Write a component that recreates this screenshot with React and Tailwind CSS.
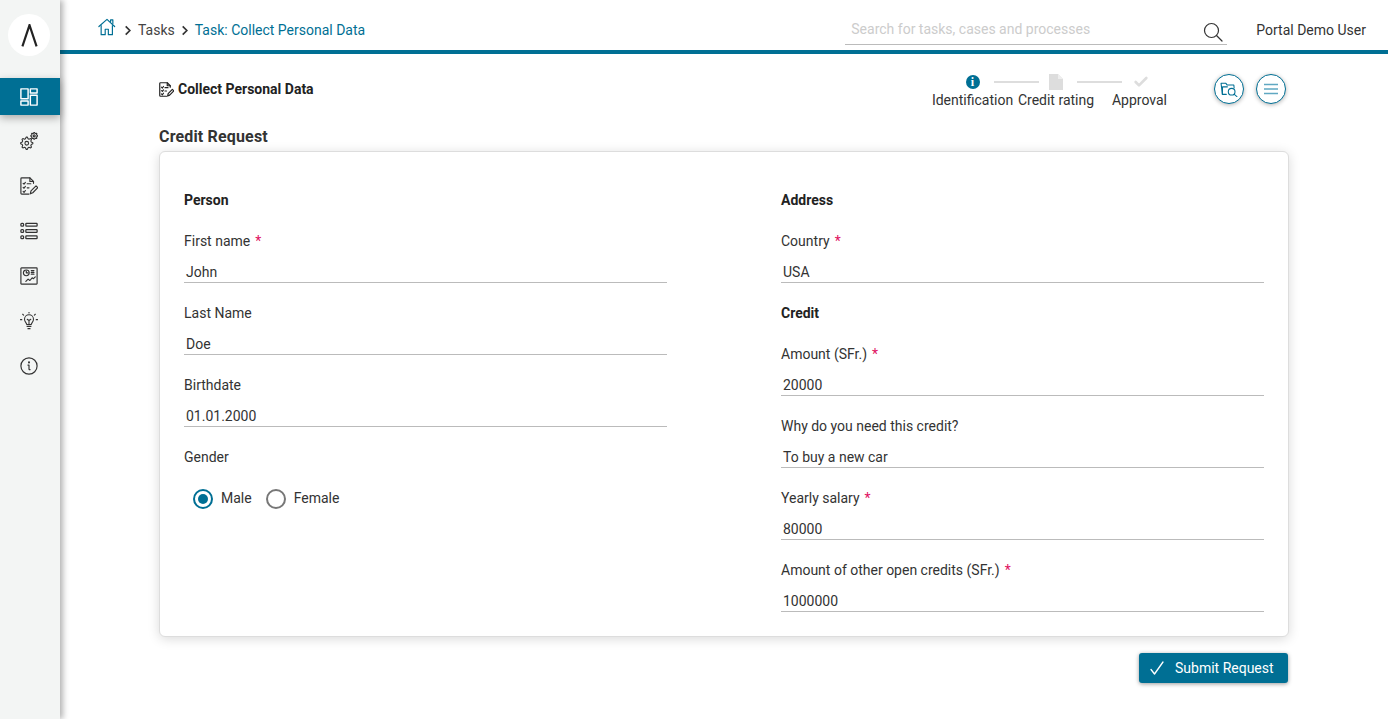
import { Check } from 'lucide-react';

const Stroke = ({ children, className = 'w-[18px] h-[18px]', w = 1.3 }) => (
  <svg viewBox="0 0 20 20" fill="none" stroke="currentColor" strokeWidth={w} strokeLinecap="round" strokeLinejoin="round" className={className}>
    {children}
  </svg>
);

const DashboardIcon = () => (
  <Stroke className="w-[18px] h-[18px] text-white" w={1.6}>
    <rect x="1" y="1" width="8" height="11" />
    <rect x="1" y="14.500" width="8" height="4.500" />
    <rect x="11.500" y="1" width="7.500" height="4.500" />
    <rect x="11.500" y="8" width="7.500" height="11" />
  </Stroke>
);

const Gear = ({ cx, cy, r, spokes = 8 }) => {
  const pts = [];
  for (let i = 0; i < spokes * 4; i++) {
    const a = (Math.PI * 2 * (i - 0.5)) / (spokes * 4);
    const rad = i % 4 < 2 ? r : r * 0.76;
    pts.push(`${(cx + rad * Math.cos(a)).toFixed(2)},${(cy + rad * Math.sin(a)).toFixed(2)}`);
  }
  return (
    <>
      <polygon points={pts.join(' ')} />
      <circle cx={cx} cy={cy} r={r * 0.3} />
    </>
  );
};

const ProcessIcon = () => (
  <Stroke w={1.2}>
    <Gear cx={7.500} cy={12.500} r={6.800} />
    <Gear cx={15.800} cy={4.300} r={3.800} />
  </Stroke>
);

const TaskIcon = ({ className = 'w-[18px] h-[18px]', w = 1.3 }) => (
  <Stroke className={className} w={w}>
    <path d="M15 7V5l-4-4H2a1 1 0 0 0-1 1v16a1 1 0 0 0 1 1h8" />
    <path d="M11 1v4h4" />
    <path d="M3.500 7l1 1 1.500-2M3.500 11.500l1 1 1.500-2M3.500 16l1 1 1.500-2" />
    <path d="M8 7.500h4M8 12h2" />
    <path d="M11.500 18.700l.7-3.200 5.600-5.600 2 2-5.600 5.600z" />
  </Stroke>
);

const ListIcon = () => (
  <Stroke w={1.4}>
    <rect x="1" y="1.500" width="3" height="3" rx="1" />
    <rect x="6.500" y="1.500" width="12.500" height="3" rx=".6" />
    <rect x="1" y="8.500" width="3" height="3" rx="1" />
    <rect x="6.500" y="8.500" width="12.500" height="3" rx=".6" />
    <rect x="1" y="15.500" width="3" height="3" rx="1" />
    <rect x="6.500" y="15.500" width="12.500" height="3" rx=".6" />
  </Stroke>
);

const StatsIcon = () => (
  <Stroke w={1.3}>
    <rect x="1" y="1" width="18" height="18" rx=".6" />
    <circle cx="7" cy="6.500" r="3.200" />
    <path d="M7 4.500v2h2" />
    <path d="M12.500 4h3M12.500 6h3M12.500 8h3" />
    <path d="M6.500 16l2.500-2.500 2 1.500 2.500-3 1.500 1 2-2" />
  </Stroke>
);

const BulbIcon = () => (
  <Stroke w={1.2}>
    <path d="M7.500 14c0-2-2.500-2.700-2.500-6a5 5 0 0 1 10 0c0 3.300-2.500 4-2.500 6z" />
    <path d="M8 8l2 1.500L12 8M10 9.500V14" />
    <path d="M7.800 16.200h4.400M8.800 18.500h2.400" />
    <path d="M10 .3v.8M3 2.500l1 1M17 2.500l-1 1M.5 8.500h1.500M18 8.500h1.500" />
  </Stroke>
);

const InfoIcon = () => (
  <Stroke w={1.3}>
    <circle cx="10" cy="10" r="9" />
    <circle cx="10" cy="6" r=".5" />
    <path d="M8.800 9H10v4.500c0 .5.5.7 1.200.5" />
  </Stroke>
);

const HomeIcon = () => (
  <svg viewBox="0 0 20 20" fill="none" stroke="currentColor" strokeWidth="1.300" strokeLinecap="round" strokeLinejoin="round" className="w-[18px] h-[18px] -mt-[6px] text-[#006f94]">
    <path d="M1 9.500L10 1.500l8.500 8" />
    <path d="M3.500 8.500V18.500H8V12.500h3.500v6H16V8.500" />
    <path d="M14 4V2h2.500v4" />
  </svg>
);

const Chevron = () => (
  <svg viewBox="0 0 8 12" fill="none" stroke="#333" strokeWidth="1.800" className="w-[8px] h-[11px]">
    <path d="M1.500 1.500L6 6l-4.500 4.500" />
  </svg>
);

const SearchIcon = () => (
  <svg viewBox="0 0 20 20" fill="none" stroke="#333" strokeWidth="1.200" strokeLinecap="round" className="w-[20px] h-[20px] mt-[4px]">
    <circle cx="8.500" cy="8.500" r="7" />
    <path d="M13.500 13.500L19 19" />
  </svg>
);

const FolderSearchIcon = () => (
  <svg viewBox="0 0 20 17" fill="none" stroke="currentColor" strokeWidth="1.200" strokeLinecap="round" strokeLinejoin="round" className="w-[18px] h-[15px] text-[#006f94]">
    <path d="M7 14H2.500L1 1.500h5.500l1.500 2h7.500l.3 3" />
    <path d="M2.500 14L2.700 5.500h5.500" />
    <circle cx="13" cy="11" r="3.800" />
    <path d="M16 14l3 2.500" />
  </svg>
);

const MenuIcon = () => (
  <svg viewBox="0 0 14 12" fill="none" stroke="#5fa8c2" strokeWidth="1.500" className="w-[14px] h-[12px]">
    <path d="M0 1.500h14M0 6h14M0 10.500h14" />
  </svg>
);

const SubmitCheck = () => (
  <svg viewBox="0 0 14 14" fill="none" stroke="white" strokeWidth="1.300" strokeLinecap="round" strokeLinejoin="round" className="w-[14px] h-[14px]">
    <path d="M1 8.500L4.500 13 13 1" />
  </svg>
);

const navIcons = [ProcessIcon, TaskIcon, ListIcon, StatsIcon, BulbIcon, InfoIcon];

const Sidebar = () => (
  <aside className="w-[60px] h-[719px] bg-[#f3f5f4] shadow-[3px_0_6px_rgba(0,0,0,0.3)] flex flex-col shrink-0 z-10">
    <div className="pt-[14px] flex justify-center pr-[2px]">
      <div className="w-[42px] h-[42px] rounded-full bg-white flex items-center justify-center">
        <svg viewBox="0 0 18 24" className="w-[17px] h-[23px]" fill="none" stroke="#222" strokeWidth="2.300">
          <path d="M1.500 23.500L9 1l7.500 22.500" />
        </svg>
      </div>
    </div>
    <div className="mt-[22px] h-[37px] bg-[#006f94] shadow-[0_3px_8px_rgba(0,0,0,0.3)] flex items-center justify-center pr-[2px]">
      <DashboardIcon />
    </div>
    <div className="flex flex-col items-center pr-[2px] pt-[17px] gap-[27px] text-[#333]">
      {navIcons.map((Icon, i) => (
        <Icon key={i} />
      ))}
    </div>
  </aside>
);

const Topbar = () => (
  <header className="h-[54px] border-b-4 border-[#006f94] flex items-center">
    <div className="flex items-center pl-[38px] text-[14px] mt-[10px]">
      <HomeIcon />
      <span className="ml-[8px]"><Chevron /></span>
      <span className="ml-[6px] text-[#444]">Tasks</span>
      <span className="ml-[6px]"><Chevron /></span>
      <span className="ml-[6px] text-[#006f94]">Task: Collect Personal Data</span>
    </div>
    <div className="ml-auto flex items-center mt-[10px]">
      <div className="w-[382px] h-[30px] border-b border-[#bbb] flex items-center justify-between pl-[6px] pr-[4px]">
        <span className="text-[14px] text-[#ccc]">Search for tasks, cases and processes</span>
        <SearchIcon />
      </div>
      <span className="ml-[29px] mr-[22px] text-[14px] text-[#333]">Portal Demo User</span>
    </div>
  </header>
);

const Stepper = () => (
  <div className="flex flex-col text-[14px] text-[#333]">
    <div className="flex items-center justify-center h-[16px] pl-[2px]">
      <div className="w-[14px] h-[14px] rounded-full bg-[#006f94] text-white flex items-center justify-center font-['Liberation_Serif',serif] font-bold text-[12px]">i</div>
      <div className="w-[45px] h-[2px] bg-[#ddd] ml-[14px] mr-[10px]" />
      <svg viewBox="0 0 14 16" className="w-[14px] h-[16px]"><path d="M0 0h9l5 5v11H0z" fill="#ddd" /><path d="M9 0v5h5z" fill="#eee" /></svg>
      <div className="w-[45px] h-[2px] bg-[#ddd] ml-[14px] mr-[11px]" />
      <Check className="w-[16px] h-[16px] text-[#ddd]" strokeWidth={4} />
    </div>
    <div className="grid grid-cols-[83px_84px_83px] mt-[1px] h-[18px] leading-[18px] whitespace-nowrap text-center">
      <div className="flex justify-center">Identification</div>
      <div className="flex justify-center">Credit rating</div>
      <div className="flex justify-center">Approval</div>
    </div>
  </div>
);

const CircleButton = ({ children }) => (
  <button className="w-[30px] h-[30px] rounded-full border border-[#006f94] bg-white flex items-center justify-center shadow-[0_1px_4px_rgba(0,0,0,0.3)]">
    {children}
  </button>
);

const SectionTitle = ({ children }) => (
  <h3 className="h-[22px] leading-[22px] mb-[19px] text-[14px] font-bold text-[#222]">{children}</h3>
);

const Field = ({ label, value, required }) => (
  <div className="mb-[19px]">
    <div className="h-[22px] leading-[22px] text-[14px] text-[#333]">
      {label}
      {required && <span className="ml-[5px] text-[#e0115f]">*</span>}
    </div>
    <div className="mt-[9px] h-[22px] leading-[22px] px-[2px] border-b border-[#bbb] text-[14px] text-[#333]">{value}</div>
  </div>
);

const Radio = ({ label, checked }) => (
  <label className="flex items-center">
    <span className={`w-[20px] h-[20px] rounded-full border-2 flex items-center justify-center ${checked ? 'border-[#006f94]' : 'border-[#777]'}`}>
      {checked && <span className="w-[10px] h-[10px] rounded-full bg-[#006f94]" />}
    </span>
    <span className="ml-[8px] text-[14px] text-[#333]">{label}</span>
  </label>
);

const App = () => (
  <div className="flex h-[719px] w-[1388px] overflow-hidden bg-white font-['Roboto',sans-serif]">
    <Sidebar />
    <div className="flex-1 flex flex-col">
      <Topbar />
      <main className="pl-[99px] pr-[99px]">
        <div className="h-[60px] flex items-start pt-[20px]">
          <div className="flex items-center mt-[5px] text-[14px] font-bold text-[#222]">
            <TaskIcon className="w-[15px] h-[15px]" w={1.6} />
            <span className="ml-[4px]">Collect Personal Data</span>
          </div>
          <div className="ml-auto flex items-start mr-[3px]">
            <Stepper />
            <div className="flex gap-[12px] ml-[33px]">
              <CircleButton><FolderSearchIcon /></CircleButton>
              <CircleButton><MenuIcon /></CircleButton>
            </div>
          </div>
        </div>
        <h2 className="h-[24px] leading-[24px] mt-[11px] mb-[2px] text-[16px] tracking-[0.01em] font-bold text-[#333]">Credit Request</h2>
        <section className="rounded-[6px] border border-[#ddd] bg-white shadow-[0_2px_12px_rgba(0,0,0,0.15)] px-[24px] pt-[37px] pb-[5px] grid grid-cols-[483px_483px] justify-between">
          <div>
            <SectionTitle>Person</SectionTitle>
            <Field label="First name" value="John" required />
            <Field label="Last Name" value="Doe" />
            <Field label="Birthdate" value="01.01.2000" />
            <div className="h-[22px] leading-[22px] text-[14px] text-[#333]">Gender</div>
            <div className="flex gap-[14px] pl-[9px] mt-[20px]">
              <Radio label="Male" checked />
              <Radio label="Female" />
            </div>
          </div>
          <div>
            <SectionTitle>Address</SectionTitle>
            <Field label="Country" value="USA" required />
            <SectionTitle>Credit</SectionTitle>
            <Field label="Amount (SFr.)" value="20000" required />
            <Field label="Why do you need this credit?" value="To buy a new car" />
            <Field label="Yearly salary" value="80000" required />
            <Field label="Amount of other open credits (SFr.)" value="1000000" required />
          </div>
        </section>
        <div className="flex justify-end mt-[16px] pr-[1px]">
          <button className="w-[149px] h-[30px] rounded-[3px] bg-[#006f94] text-white text-[14px] font-normal flex items-center pl-[11px] shadow-[0_1px_4px_rgba(0,0,0,0.4)]">
            <SubmitCheck />
            <span className="ml-[11px]">Submit Request</span>
          </button>
        </div>
      </main>
    </div>
  </div>
);

export default App;
